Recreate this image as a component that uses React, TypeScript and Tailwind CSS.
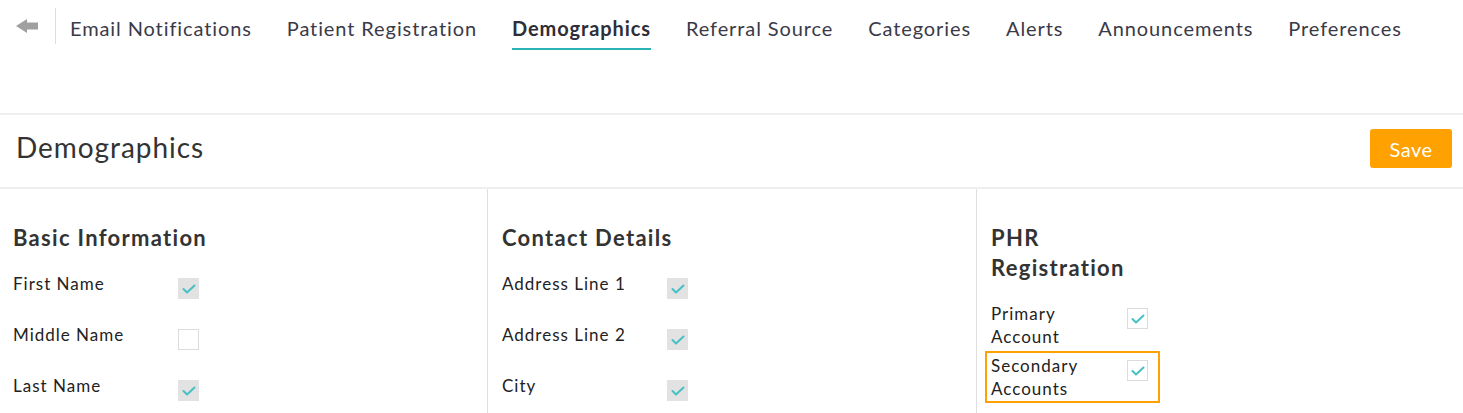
import React from "react";

type Field = {
  label: string;
  checked: boolean;
  disabled?: boolean;
  highlight?: boolean;
};

interface Section {
  title: string;
  narrow?: boolean;
  fields: Field[];
}

const tabs = [
  "Email Notifications",
  "Patient Registration",
  "Demographics",
  "Referral Source",
  "Categories",
  "Alerts",
  "Announcements",
  "Preferences",
];

const sections: Section[] = [
  {
    title: "Basic Information",
    fields: [
      { label: "First Name", checked: true, disabled: true },
      { label: "Middle Name", checked: false },
      { label: "Last Name", checked: true, disabled: true },
    ],
  },
  {
    title: "Contact Details",
    fields: [
      { label: "Address Line 1", checked: true, disabled: true },
      { label: "Address Line 2", checked: true, disabled: true },
      { label: "City", checked: true, disabled: true },
    ],
  },
  {
    title: "PHR Registration",
    narrow: true,
    fields: [
      { label: "Primary Account", checked: true },
      { label: "Secondary Accounts", checked: true, highlight: true },
    ],
  },
];

const CheckBox: React.FC<{ checked: boolean; disabled?: boolean }> = ({ checked, disabled }) => (
  <span
    className={
      disabled
        ? "flex h-[21px] w-[21px] shrink-0 items-center justify-center bg-[#e2e2e2]"
        : "flex h-[21px] w-[21px] shrink-0 items-center justify-center border border-[#dcdcdc] bg-white"
    }
  >
    {checked && (
      <svg width="14" height="10" viewBox="0 0 14 10" fill="none">
        <path d="M1.5 5 L5 8.5 L12.5 1.5" stroke="#45c0c4" strokeWidth="2" strokeLinecap="round" strokeLinejoin="round" />
      </svg>
    )}
  </span>
);

const App: React.FC = () => {
  return (
    <div className="min-h-[413px] w-full bg-white text-[#333] font-['Lato',sans-serif]">
      {/* top tabs */}
      <div className="flex h-[115px] items-start border-b-2 border-[#efefef]">
        <div className="flex items-center pt-[8px]">
          <div className="ml-[16px] flex h-[36px] w-[22px] items-center">
            <svg width="22" height="14" viewBox="0 0 22 14">
              <path d="M0 7 L11 0 L11 3.5 L22 3.5 L22 10.5 L11 10.5 L11 14 Z" fill="#a0a0a0" />
            </svg>
          </div>
          <div className="ml-[17px] h-[36px] w-px bg-[#dddddd]" />
        </div>
        <nav className="ml-[14px] flex gap-[35px] pt-[16px]">
          {tabs.map((t) => {
            const active = t === "Demographics";
            return (
              <div
                key={t}
                className={
                  active
                    ? "border-b-2 border-[#2ab3b6] pb-[8px] text-[20px] leading-[24px] tracking-[0.9px] font-bold text-[#2e2e38]"
                    : "border-b-2 border-transparent pb-[8px] text-[20px] leading-[24px] tracking-[0.9px] text-[#3a3a48]"
                }
              >
                {t}
              </div>
            );
          })}
        </nav>
      </div>

      {/* page header */}
      <div className="flex h-[74px] items-center justify-between border-b-2 border-[#efefef] pb-[5px] pl-[16px] pr-[11px]">
        <h1 className="mb-[4px] text-[28px] leading-[34px] tracking-[0.95px] text-[#333]">Demographics</h1>
        <button className="h-[39px] w-[82px] rounded-[3px] bg-[#ffa100] text-[20px] tracking-[0.5px] text-white">Save</button>
      </div>

      {/* columns */}
      <div className="grid grid-cols-[487px_489px_1fr]">
        {sections.map((s, i) => (
          <div
            key={s.title}
            className={i === 0 ? "pl-[7px] pt-[34px] pb-[12px]" : "border-l border-[#dedede] pl-[8px] pt-[34px] pb-[12px]"}
          >
            <h2
              className={
                s.narrow
                  ? "ml-[6px] w-[150px] text-[22px] leading-[30px] tracking-[1.3px] font-bold text-[#333]"
                  : "ml-[6px] text-[22px] leading-[30px] tracking-[1.3px] font-bold text-[#333]"
              }
            >
              {s.title}
            </h2>
            <div className="mt-[16px] flex flex-col">
              {s.fields.map((f) => (
                <div
                  key={f.label}
                  className={
                    f.highlight
                      ? "flex min-h-[51px] w-fit items-start border-2 border-[#ffa100] py-[1px] pl-[4px] pr-[10px]"
                      : "flex min-h-[51px] w-fit items-start border-2 border-transparent py-[1px] pl-[4px] pr-[10px]"
                  }
                >
                  <span
                    className={
                      s.narrow
                        ? "w-[136px] pr-[6px] text-[17px] leading-[23px] tracking-[1px] text-[#222]"
                        : "w-[165px] text-[17px] leading-[23px] tracking-[1px] text-[#222]"
                    }
                  >
                    {f.label}
                  </span>
                  <span className="mt-[6px]">
                    <CheckBox checked={f.checked} disabled={f.disabled} />
                  </span>
                </div>
              ))}
            </div>
          </div>
        ))}
      </div>
    </div>
  );
};

export default App;
